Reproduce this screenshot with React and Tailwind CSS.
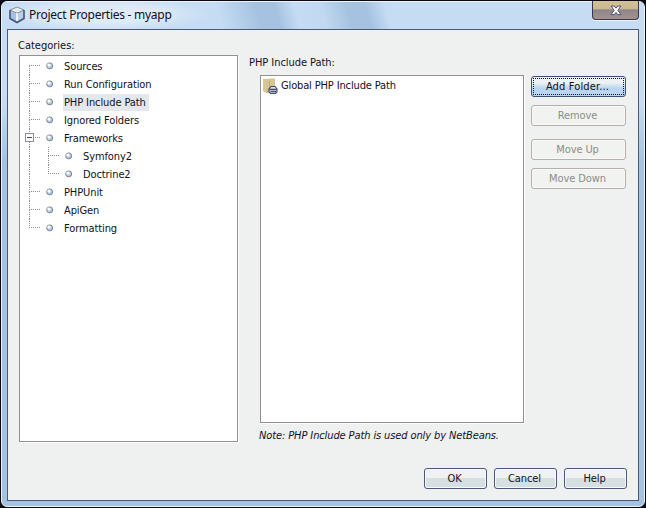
const BOTTOM = ['OK', 'Cancel', 'Help'];

const TREE = [
  { label: 'Sources', first: true },
  { label: 'Run Configuration' },
  { label: 'PHP Include Path', selected: true },
  { label: 'Ignored Folders' },
  { label: 'Frameworks', expanded: true },
  { label: 'Symfony2', child: true },
  { label: 'Doctrine2', child: true, lastChild: true },
  { label: 'PHPUnit' },
  { label: 'ApiGen' },
  { label: 'Formatting', last: true },
];

function Cube() {
  return (
    <svg width="16" height="18" viewBox="0 0 16 18" className="shrink-0">
      <path d="M8 1 L15 4 V12.5 L8 16.5 L1 12.5 V4 Z" fill="#d9e6ef" />
      <path d="M1.5 4.5 L8 7.5 V16 L1.5 12.3 Z" fill="#a4c2de" />
      <path d="M8 7.5 L14.5 4.5 V12.3 L8 16 Z" fill="#b9d0e6" />
      <path d="M1 4 L8 1 L15 4 L8 7.2 Z" fill="#e6edf1" stroke="#7d8192" strokeWidth=".9" />
      <path d="M8 7.2 V15.5" stroke="#fff" strokeWidth="1.5" />
      <path d="M1 4 V12.5 L8 16.5 L15 12.5 V4" fill="none" stroke="#46527a" strokeWidth="1.6" />
    </svg>
  );
}

function Bullet() {
  return (
    <svg width="8" height="8" viewBox="0 0 8 8" className="shrink-0">
      <circle cx="3.7" cy="3.9" r="3" fill="#a9c8e6" stroke="#85868f" strokeWidth="1" />
      <circle cx="3" cy="3.1" r="1.7" fill="#fff" />
    </svg>
  );
}

function Branch({ half, stub = true }) {
  return (
    <span className="flex h-[18px] w-[11px] shrink-0 flex-col">
      <span className={`h-[9px] w-full border-l border-dotted border-[#8c8c94] ${stub ? 'border-b' : ''}`} />
      <span className={`h-[9px] w-full border-l border-dotted ${half ? 'border-transparent' : 'border-[#8c8c94]'}`} />
    </span>
  );
}

function Trunk({ item }) {
  if (item.expanded) {
    return (
      <span className="relative flex">
        <Branch />
        <span className="absolute -left-1 top-[4px] flex size-[9px] items-center justify-center border border-[#8d8f98] bg-white">
          <span className="h-px w-[5px] bg-[#3d4a78]" />
        </span>
      </span>
    );
  }
  if (item.first) {
    return (
      <span className="flex h-[18px] w-[11px] shrink-0 flex-col pt-2">
        <span className="h-[10px] w-full border-l border-t border-dotted border-[#8c8c94]" />
      </span>
    );
  }
  // The two child rows sit between Frameworks and PHPUnit, so the trunk runs straight through them.
  return <Branch half={item.last} stub={!item.child} />;
}

function TreeRow({ item }) {
  return (
    <li className="flex h-[18px] items-center">
      <Trunk item={item} />
      {item.child && (
        <span className="ml-2 flex">
          <Branch half={item.lastChild} />
        </span>
      )}
      <span className="ml-[6px] flex">
        <Bullet />
      </span>
      <span
        className={`h-[17px] whitespace-nowrap leading-[17px] tracking-[-0.1px] ${
          item.selected ? 'ml-[9px] bg-[#e3e8ec] pl-px pr-[3px]' : 'ml-[10px]'
        }`}
      >
        {item.label}
      </span>
    </li>
  );
}

function SideButton({ label, active }) {
  return active ? (
    <button className="h-[21px] w-[95px] rounded-[3px] border border-[#3c4f78] bg-gradient-to-b from-[#edf1f3] from-30% to-[#b9d5f0] to-60% p-px text-[#10101c]">
      <span className="flex h-full items-center justify-center border border-dotted border-[#10142a] pr-[2px] leading-none tracking-[0.15px]">{label}</span>
    </button>
  ) : (
    <button className="flex h-[21px] w-[95px] items-center justify-center rounded-[3px] border border-[#b3b0a9] bg-[#f1f3f1] pr-[2px] leading-none tracking-[-0.1px] text-[#8c8c8c] shadow-[inset_0_0_0_1px_#f9faf8]">
      {label}
    </button>
  );
}

function FolderIcon() {
  return (
    <svg width="16" height="17" viewBox="0 0 16 17" className="shrink-0">
      <path d="M1 1 H6 L7 0.5 H13 V10 L8 15 H4 L1 13 Z" fill="#d9c594" />
      <path d="M7.5 3 V9 L5 14" fill="none" stroke="#bda876" />
      <path d="M9 8.5 H13 L15 11 V14 L13.5 15.5 H8.5 L7 14 V11 Z" fill="#dfe3ea" stroke="#434a66" strokeWidth="1.1" />
      <path d="M7.5 11.5 H15 M8.5 13.6 H14" fill="none" stroke="#434a66" strokeWidth="1.3" />
    </svg>
  );
}

export default function App() {
  return (
    <main className="h-[508px] w-[646px] bg-[#0c0812] p-px font-['DejaVu_Sans_Condensed','DejaVu_Sans',sans-serif] text-[11px] text-[#10101c]">
      <div className="flex h-full flex-col rounded-[6px] border border-[#eaf4fb] bg-[linear-gradient(180deg,#c5dcf3_0%,#c5dcf3_20%,#a5c3e1_32%,#a5c3e1_100%)] px-[5px] pb-[5px]">
        <header className="-mx-[5px] flex h-[27px] shrink-0 items-start justify-between rounded-t-[5px] bg-[radial-gradient(ellipse_110px_18px_at_100px_12px,#e2eef8_0%,#dceaf7_50%,transparent_100%),linear-gradient(75deg,#c5dcf3_0%,#c5dcf3_34%,#a5c3e1_40%,#a5c3e1_43%,#c5dcf3_46%,#c1d9f0_50%,#a5c3e1_54%,#a5c3e1_57%,#c5dcf3_60%,#c5dcf3_100%)] pl-[7px] pr-[5px]">
          <div className="flex items-center gap-1 pt-[4px]">
            <Cube />
            <h1 className="font-['Noto_Sans',sans-serif] text-[12px] leading-[18px] tracking-[-0.27px]">Project Properties - myapp</h1>
          </div>
          <button className="-mt-px flex h-[19px] w-[47px] items-center justify-center rounded-b-[4px] border border-t-0 border-[#353650] bg-[linear-gradient(180deg,#d3c198_0%,#c9b891_42%,#8f8588_50%,#a39391_100%)] shadow-[0_1px_0_#eaf4fb]">
            <svg width="12" height="11" viewBox="0 0 12 11">
              <path d="M1 1 H4.3 L6 3.2 L7.7 1 H11 L7.9 5.3 L11 9.6 H7.7 L6 7.4 L4.3 9.6 H1 L4.1 5.3 Z" fill="#fff" stroke="#4b5475" strokeWidth="1" />
            </svg>
          </button>
        </header>

        <section className="flex min-h-0 flex-1 flex-col border border-[#49587b] bg-[#eff1f0]">
          <div className="flex h-[414px] pl-[11px]">
            <div className="flex w-[220px] flex-col pt-[8px]">
              <h2 className="-ml-px h-[17px] leading-[15px]">Categories:</h2>
              <ul className="h-[387px] w-[219px] border border-[#94908f] bg-white pl-[9px] pt-px shadow-[1px_1px_0_#fff]">
                {TREE.map((item) => (
                  <TreeRow key={item.label} item={item} />
                ))}
              </ul>
            </div>
            <div className="flex w-[285px] flex-col pl-[10px] pt-[24px]">
              <h2 className="h-[21px] shrink-0 leading-[17px] tracking-[-0.05px]">PHP Include Path:</h2>
              <div className="ml-[11px] h-[348px] w-[264px] shrink-0 border border-[#94908f] bg-white shadow-[1px_1px_0_#fff]">
                <div className="flex h-[19px] items-center gap-[3px] pl-px pt-px">
                  <FolderIcon />
                  <span className="tracking-[-0.14px]">Global PHP Include Path</span>
                </div>
              </div>
              <p className="ml-[10px] mt-[5px] whitespace-nowrap italic leading-[16px] tracking-[-0.11px]">Note: PHP Include Path is used only by NetBeans.</p>
            </div>
            <div className="flex flex-col gap-[8px] pl-[7px] pt-[46px]">
              <SideButton label="Add Folder..." active />
              <SideButton label="Remove" />
              <div className="mt-[5px] flex flex-col gap-[8px]">
                <SideButton label="Move Up" />
                <SideButton label="Move Down" />
              </div>
            </div>
          </div>
          <footer className="flex justify-end gap-[7px] pr-[11px] pt-[24px]">
            {BOTTOM.map((label) => (
              <button
                key={label}
                className="flex h-[21px] w-[63px] items-center justify-center rounded-[3px] border border-[#49587b] bg-gradient-to-b from-[#f0f2f1] from-45% to-[#d6dfe2] to-50% pr-[2px] leading-none tracking-[-0.1px] shadow-[inset_0_0_0_1px_#f8faf9]"
              >
                {label}
              </button>
            ))}
          </footer>
        </section>
      </div>
    </main>
  );
}
